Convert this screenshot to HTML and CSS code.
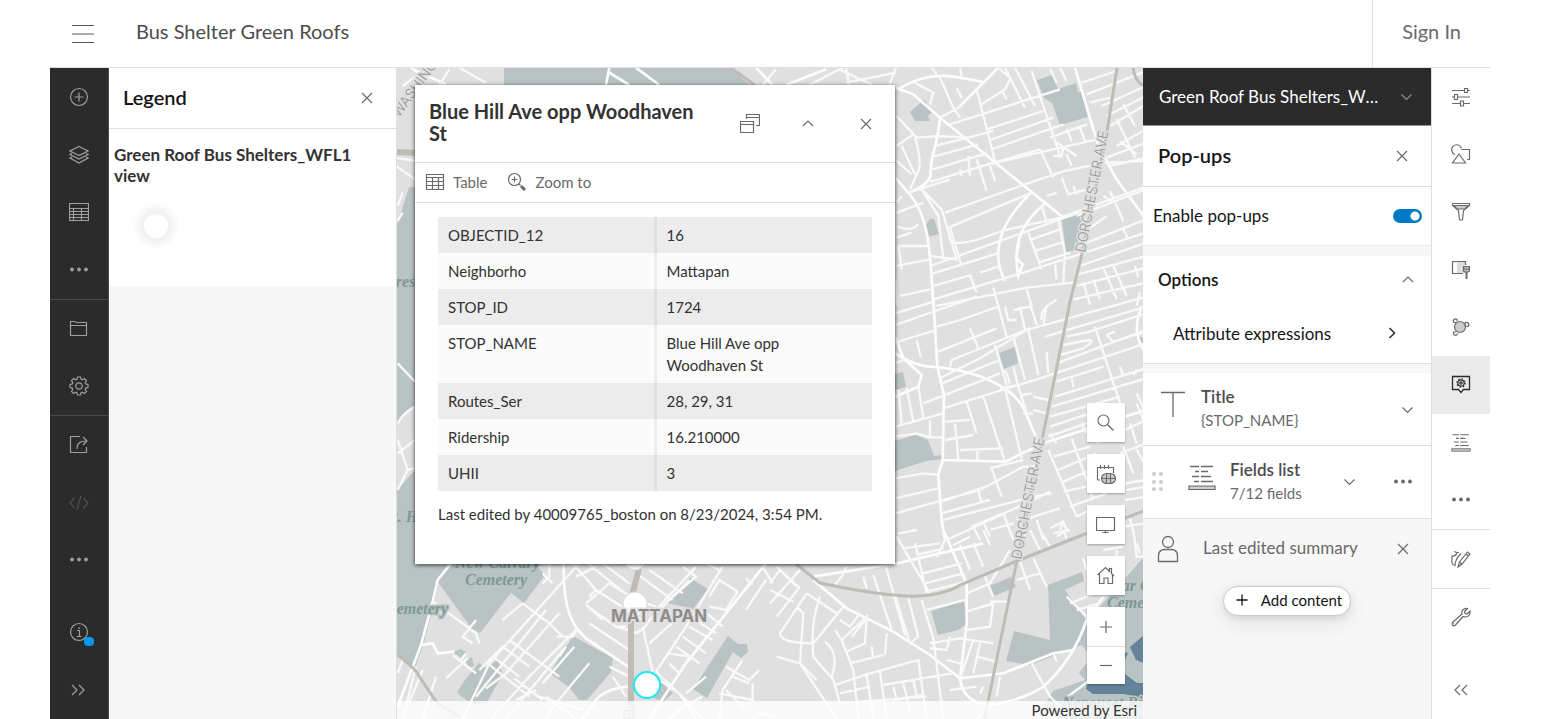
FILE: index.html
```html
<!DOCTYPE html>
<html lang="en">
<head>
<meta charset="utf-8">
<title>Bus Shelter Green Roofs</title>
<link rel="stylesheet" href="styles.css">
</head>
<body>
<svg class="defs" aria-hidden="true">
  <symbol id="i-x" viewBox="0 0 16 16"><path d="M3 3l10 10M13 3L3 13"/></symbol>
  <symbol id="i-down" viewBox="0 0 16 16"><path d="M2.500 5.500l5 5 5-5"/></symbol>
  <symbol id="i-up" viewBox="0 0 16 16"><path d="M3 10l5-5 5 5"/></symbol>
  <symbol id="i-dots" viewBox="0 0 24 24"><g fill="currentColor" stroke="none"><circle cx="5" cy="11.500" r="1.900"/><circle cx="12" cy="11.500" r="1.900"/><circle cx="19" cy="11.500" r="1.900"/></g></symbol>
  <symbol id="i-fields" viewBox="0 0 28 26"><path d="M2 1.500h9M13 1.500h12M7 6.500h4M13 6.500h7M4 11.500h7M13 11.500h10M6 16.500h5M13 16.500h12" stroke-width="1.500"/><path d="M1 21h26v3.500H1z" fill="#ccc"/></symbol>
</svg>

<div class="app">
  <header class="topbar">
    <button class="menu" aria-label="Menu"><svg width="22" height="20"><path d="M0 1.500h22M0 18.500h22" stroke="#555"/><path d="M0 10h22" stroke="#aaa" stroke-width="2"/></svg></button>
    <h1 class="map-title">Bus Shelter Green Roofs</h1>
    <a class="signin" href="#">Sign In</a>
  </header>

  <div class="workspace">
    <nav class="rail rail-dark" aria-label="Map tools">
      <div class="rail-group four">
        <button aria-label="Add"><svg width="20" height="20"><circle cx="10" cy="10" r="8.500"/><path d="M10 5.500v9M5.500 10h9"/></svg></button>
        <button aria-label="Layers"><svg width="20" height="20"><path d="M10 1.500l9 4.500-9 4.500L1 6z"/><path d="M3 8.500l-2 1 9 4.500 9-4.500-2-1M3 12l-2 1 9 5 9-5-2-1"/></svg></button>
        <button aria-label="Tables"><svg width="20" height="20"><path d="M.5 1.500h19v17H.5zM.5 6.500h19M4.500 6.500v12M12.500 6.500v12M.5 9.500h19M.5 12.500h19M.5 15.500h19"/></svg></button>
        <button aria-label="More"><svg width="24" height="24"><use href="#i-dots"/></svg></button>
      </div>
      <div class="rail-group two">
        <button aria-label="Save and open"><svg width="20" height="20"><path d="M1.500 16.500v-14h4l2 1h10v13zM1.500 6.500h16" /></svg></button>
        <button aria-label="Map properties"><svg width="20" height="20" viewBox="0 0 20 20"><circle cx="10" cy="10" r="3.200"/><path d="M8.500 1h3l.6 2.300 1.200.5L15.400 2.500l2.100 2.100-1.300 2.100.5 1.200 2.300.6v3l-2.300.6-.5 1.200 1.300 2.100-2.100 2.100-2.100-1.300-1.200.5-.6 2.300h-3l-.6-2.300-1.200-.5-2.100 1.300-2.100-2.100 1.300-2.100-.5-1.200L1 11.500v-3l2.300-.6.5-1.200L2.500 4.600l2.100-2.100 2.100 1.300 1.200-.5z"/></svg></button>
      </div>
      <div class="rail-group three">
        <button aria-label="Share map"><svg width="20" height="20"><path d="M11 1.500H1.500v16h16V12M8 14c0-6 3-8 9-8M14 2l4 4-4 4"/></svg></button>
        <button class="disabled" disabled aria-label="Create app"><svg width="20" height="20"><path d="M5.500 5L1 10l4.500 5M14.500 5l4.500 5-4.500 5M12 3L8 17"/></svg></button>
        <button aria-label="More options"><svg width="24" height="24"><use href="#i-dots"/></svg></button>
      </div>
      <div class="rail-group two rail-end">
        <button class="info" aria-label="Information"><svg width="20" height="20"><circle cx="10" cy="10" r="8.500"/><path d="M10 5v2M8 8.500h2.500v6M7.500 14.500h5"/></svg><span class="badge"></span></button>
        <button aria-label="Expand"><svg width="20" height="20"><path d="M3 5l5 5-5 5M10 5l5 5-5 5"/></svg></button>
      </div>
    </nav>

    <aside class="legend">
      <div class="panel-head">
        <h2>Legend</h2>
        <button aria-label="Close legend"><svg width="16" height="16"><use href="#i-x"/></svg></button>
      </div>
      <div class="legend-body">
        <h3>Green Roof Bus Shelters_WFL1 view</h3>
        <span class="swatch"><i></i></span>
      </div>
    </aside>

    <main class="map">
      <svg class="basemap" viewBox="397 68 746 651" preserveAspectRatio="xMinYMin slice" aria-label="Map of Mattapan">
        <g class="park">
          <path d="M504 68h227l20 18H504z"/>
          <path d="M397 225l12-38h8v220q-10 3-20 16z"/>
          <path d="M397 490l18-20v95h37l-13 17-15 61-9 25-18-14z"/>
          <path d="M438 582l15-18h82l10 11-21 28-13-10-31 40-8-4z"/>
          <path d="M573 636l40 22-2 14-24 28h-8l-9-12-20-15z"/>
          <path d="M457 692l8-12 14-17 8 5 11-9 3 10 1 7-7 12-9 16h-14l-11-8zM453 652l8-3 5 3-3 7zM466 660l6-3 2 9-6 2z"/>
          <path d="M728 636l10 8 9 0 1 8-7 6-8-6-26 46-14-9zM690 578l18 11-15 20-25-6 10-14zM660 681l13 12-10 9-12-5z"/>
          <path d="M931 611l33-10 3 23-9 6-20 5z"/>
          <path d="M989 586l22-9 5 10-22 9zM1048 585l34-13 2 9-19 9 22 31 56-63v161h-82l-18-10 10-18 32-11-6-7 12-15-9-13-52 20-24-4 8-30 36 9z"/>
          <path d="M1037 80l15-5 6 14 18-6 2 9 4 0 6 25-28 8-8-22-8-5zM910 112l14-12 8 12-4 4 2 5-10 0-5 0zM1062 220l21-7-6 37-11 2zM925 226l5-7 4 0 5 15-12 3z"/>
          <path d="M999 353l16-6 3 16-14 6zM895 374l8-2 3 15-11 3zM895 441l20-6 13 5 6 16 8-1v4l-16 2-31 10zM1139 336l8 5v15l-6-8z"/>
        </g>
        <g class="water"><path d="M1143 636l-13 11 6 13 8 3zM1087 684l22 0 12-13 16 12 6 0v15l-20-4-30 0-7-5zM1124 652l4 1-3 7z"/></g>

        <g transform="translate(396 66) scale(.3333)" class="streets">
          <path class="big" d="M45 5L60 15L150 55M640 5L630 57M640 20L700 57M720 5L790 57M1080 5L1130 57M1170 57L1290 10"/>
          <path d="M190 5L270 50M60 30L20 60M160 10L130 57M1140 10L1100 57M1240 57L1340 5M1330 10L1430 57M1350 50L1500 20M1350 5L1360 57M1500 5L1480 57M0 275L60 285M0 300L57 340M5 420L20 380M5 465L20 440"/>
          <path d="M5 892L57 947M5 1072Q20 1042 57 1022M5 1122L35 1212L5 1272M5 1162L57 1122M35 1212L57 1207"/>
        </g>

        <g transform="translate(890 66) scale(.3333)" class="streets">
          <path class="big" d="M16 65L70 85L150 155L520 455M150 155C142 250 118 270 122 330Q110 360 55 380L16 335M55 380C118 450 120 550 130 720M25 70Q110 15 210 35L280 48M210 120L260 70L325 5M555 5L625 240L680 340L768 460M425 378C330 470 300 560 345 645M470 408C380 480 370 550 385 630L398 595L378 575L388 530"/>
          <path d="M125 5L140 25M150 35L190 125L210 155M200 65L215 95M260 70L315 285M335 72L350 100M275 115L345 70L360 40M325 5L360 35M345 5L405 125M375 5L435 120M425 15L510 270M480 8L500 50M510 5L530 45M150 155L215 120M180 175L510 70M290 190L460 135M300 222L490 155M305 250L520 175M480 215L590 175M140 210L235 215L310 195M135 240L235 215M130 272L265 235M128 310L290 262M120 348L320 288L450 250M55 380L180 340M310 292L620 220M165 440L420 350L525 315L640 290L768 285M175 485L425 380M185 525Q210 545 335 495L510 455L768 362M120 600L400 500L620 420M20 600L120 580M25 540L120 540M25 540L35 610M120 625L330 560M130 660L240 628L260 680M130 700L400 620L768 500M140 720L410 665L550 650M30 690L120 670M120 570L200 580L155 430L95 370M160 580L145 450L95 370M215 600L180 485M20 720L16 640M20 480Q60 500 85 475M20 515L65 500M20 440L100 410M20 410L35 390M80 215L20 150M80 215L145 210M20 240L70 205M75 215Q100 300 80 325L60 370M35 240L75 325M20 285L65 325M75 50L130 80L120 115M210 5L215 30M235 270L240 330M260 280L290 375M300 300L315 345M210 310L215 330M450 250L490 335M490 270L515 270L520 245M515 335L535 385L590 370M550 360L560 385M455 420L470 470M415 500L455 610M425 520L510 490M435 555L515 530M445 590L540 560M505 460L525 560L520 650M495 595L500 640M270 620L330 600M310 665L325 720M410 670L425 720M470 390L500 380M570 185L585 225M530 190L545 225M500 230L560 270M530 265L545 300M575 50L680 15M590 85L768 15M600 110L660 95M635 120L768 60M650 150L768 90M660 180L768 115M680 240L768 190M690 225L740 265M680 160L735 275M700 115L735 180M650 275L768 230M660 300L768 275M560 450L768 370M580 500L650 450M570 600L768 530M565 625L768 570M560 660L768 605M590 530L768 460M550 700L768 650M640 605L680 700M670 600L710 690M580 650L600 715M610 640L630 700M640 390L670 410M660 375L700 465M700 490L715 520M735 600L745 635M740 720L750 680"/>
        </g>

        <g transform="translate(890 300) scale(.3333)" class="streets">
          <path class="big" d="M130 0L142 200L162 285L158 480L145 525L155 660L165 720M16 160Q80 200 125 200C260 210 380 260 410 345L450 440M16 110L40 175L95 225L85 260L16 290M160 480L345 485L460 430L768 330M755 20C730 80 740 120 768 160"/>
          <path d="M16 40L130 5M16 75L260 -10M16 130L40 120L140 90M140 80L210 60L325 20M145 155L320 85M150 235L270 175L410 90L768 -10M155 250L330 180M180 200L185 180L420 85M100 310L330 220M160 325L450 235L768 130M16 380L160 340M16 410L80 400L120 412L160 412M120 360L120 410M16 190L40 180M80 120L92 170M240 85L265 145M315 135L350 255M370 110L405 240M415 90L445 225M345 20L355 60L380 60M320 0L350 110M390 20L405 90M370 30L420 20M420 10L440 75M455 60Q450 25 500 0M460 75L470 15M470 155L475 220M465 110L768 20M530 110L600 95L768 40M520 135L595 120Q620 120 580 145L510 165M500 190L768 90M650 105L675 95M650 105L670 125L768 95M615 80L690 310M500 245L640 200M545 235L550 260M495 290L768 205M485 320L768 235M480 350L690 290M480 380L690 310M475 410L590 370M690 200L700 230M740 210L730 225M740 280L768 340M345 265L395 475M230 305L260 400M280 290L345 485M330 265L385 255M370 200L385 260L410 340M395 285L425 280M430 290L475 300M400 340L430 340M430 330L470 340M345 210L360 250M165 365L240 360M195 370L200 420L205 480M165 420L250 405M210 450L340 445M262 445L262 480M85 260L100 355M50 265L70 365M25 270L35 370M16 535L100 520L145 525M16 595L145 565M16 640L270 570L400 500L440 500M155 605L300 555M155 640L300 600M160 660L430 590L485 580M170 720L430 600L480 575M305 505L335 590M265 570L275 610M300 505L400 480M250 680L270 720M245 680L340 640L370 720M280 665L300 710M300 690L370 670M380 650L410 720M440 660L460 720M400 660L510 625M475 450L560 650M545 415L590 540L610 600M490 470L600 440M505 510L620 460M520 545L590 515M520 575L590 560M540 620L650 580M560 650L600 630M480 685L520 665L530 690L500 710M510 690L520 665M575 370L590 400M480 400L500 430M620 430L768 360M690 460L768 430M700 440L730 520M720 370L740 430M740 310L768 380M735 440L768 500M705 550L768 540M710 570L768 560M705 600L768 590M700 680L768 670M720 655L735 720"/>
        </g>

        <g transform="translate(396 530) scale(.3333)" class="streets">
          <path class="big" d="M165 100L125 150L110 215L75 345L5 530M503 100C500 240 530 290 570 325L700 412M700 470Q630 475 600 510L560 567M1110 100L870 400L760 567M75 345L110 340L125 370L175 365"/>
          <path d="M570 225L620 270M5 430L20 390M60 410L20 567M30 540L80 420M120 440L80 567M110 215L240 310L250 340M240 270L200 320L230 340M550 100L280 400L200 567M450 240L240 500M490 250L330 430L270 475M545 295L400 440L285 567M480 320L530 320L545 295M510 350L330 567M535 350L440 460M580 400L480 520L450 567M150 445L215 385M170 375L240 430M190 395L210 370M250 420L320 350L400 410M290 380L370 440M340 330L490 440M380 220L460 280L500 320M320 270L380 220M275 400L400 500M355 445L440 510M360 510L420 480M450 500L540 567M430 500L560 540M490 380L510 350M530 100L600 180L740 270M575 100L700 200M540 140L600 110M620 100L700 160M570 220L640 160M570 225L660 290L730 310M580 280L700 360M640 160L720 210L780 230M600 180L580 200M700 310Q740 310 760 270L880 150M690 290L660 290M740 290L770 425M760 340L850 260M780 425L870 290L980 110M780 240L900 110M760 120L860 190M720 130L830 210M860 110L900 140L820 210M940 230L990 240L1025 185L970 150L940 200M930 100L970 120M1050 145L1070 165M1110 150L1050 240M1100 110L1130 160M860 320L930 370M880 290L950 330M900 270L960 310M920 240L980 290M840 350L910 400M820 370L880 380L850 430L820 400M780 425L880 520L920 500M790 450L850 490L900 567M870 490L930 440M1090 420L1060 450L990 410M1070 460L1070 510L970 490M1040 390L980 480L970 567M1010 440L1060 460M990 480L1050 540M850 490L920 567M700 440L640 410M690 500L650 440M1070 567Q1080 540 1140 560M440 130L470 160M460 100L460 140L440 160M820 567L870 520"/>
        </g>

        <g transform="translate(770 530) scale(.3333)" class="streets">
          <path class="big" d="M130 150L230 235L370 305L480 375L570 445Q580 520 660 525Q760 510 820 470Q910 390 950 270L1000 200M520 0L590 160L590 280L570 445M570 445L700 430L850 370L910 360M130 140L380 100L640 40"/>
          <path d="M0 160L30 120L90 175M20 110L80 170M0 220L90 120M20 260L90 170M0 180L70 215M110 190L200 250M110 190L30 310Q30 340 130 340L220 230M80 230L100 250L90 400L140 450M200 567L90 400L20 380M150 200Q120 280 130 380L190 450L210 520M165 335Q210 370 185 440M215 330L250 420L265 567M195 300L215 330L290 260L285 340L230 365M210 270L240 290L270 250M240 400L340 375M350 310L345 375M245 320L290 265M305 350L310 385M280 140L290 175M310 135L330 195L365 300M345 100L405 315M375 195L420 340L445 320L415 205M455 210L490 325L520 567M195 465L300 430L445 390L470 567M330 425L350 567M290 435L310 567M340 465L545 430M370 470L380 510M400 460L420 540M430 450L440 500M210 490L300 470M370 510L460 495M200 520L470 500M540 480L620 470M470 240L585 210M480 340L570 325L670 340M480 355L530 360L540 320M530 390L570 400M610 330L570 445M630 340L610 430M620 380L680 395M590 245L670 220L660 290L590 300M460 130L575 100M465 160L580 130M470 185L590 155M380 20L480 190M400 55L510 40M435 40L470 190M440 75L520 55M230 110L215 140L190 170M385 10L440 0M500 80L530 20M550 45L600 20M570 45L600 120M610 40L640 110M640 0L660 45M590 190L660 160L720 60M640 130L670 200M750 95L780 180M790 85L830 170M740 150L810 130M720 215L660 215M780 0L810 60M810 0L840 50M850 10L900 0M880 0L890 25M890 200L960 270M900 220L1000 180M920 240L990 220M940 85L950 120M785 400L840 500L870 530M850 370L860 395M690 440L680 500M640 470L630 490M1000 60L1060 50M1040 90L1040 60M1090 0L1100 80L1140 80M1100 40L1110 70M880 510L960 450M620 567L660 530"/>
        </g>

        <g class="arterial">
          <path d="M1117 68L1106 138 1081 258 1070 302 1042 440 1017 560 988 702 984 719"/>
          <path d="M796 564L820 583Q900 600 930 595Q950 592 960 585L1017 561 1090 532 1146 510M1133 66Q1134 82 1146 87M397 655Q405 660 415 670L437 703 460 717M731 68L748 80 760 90"/>
          <path class="wide" d="M640 564L631 600V720M396 152L418 153"/>
        </g>
        <g class="street-label">
          <text transform="translate(1085 253) rotate(-79)">DORCHESTER AVE</text>
          <text transform="translate(1021 560) rotate(-79)">DORCHESTER AVE</text>
          <text transform="translate(399 118) rotate(-54)">WASHINGTON</text>
          <text transform="translate(634 728) rotate(-90)">RD</text>
        </g>
        <g class="park-label">
          <text x="455" y="568">New Calvary</text><text x="465" y="585">Cemetery</text>
          <text x="386" y="614">Cemetery</text><text x="377" y="287">Forest</text><text x="379" y="522">Mt. Hope</text>
          <text x="1096" y="591">Cedar Grove</text><text x="1107" y="608">Cemetery</text>
          <text x="1062" y="708">Neponset River</text><text x="1068" y="725">Reservation</text>
        </g>
        <circle class="stop" cx="635" cy="558" r="12"/>
        <circle class="stop" cx="635" cy="604" r="12"/>
        <text class="place-label" x="611" y="622">MATTAPAN</text>
        <circle class="stop selected" cx="647" cy="685" r="13"/>
      </svg>

      <section class="popup" aria-label="Feature details">
        <div class="popup-head">
          <h2>Blue Hill Ave opp Woodhaven St</h2>
          <button aria-label="Dock"><svg width="20" height="20"><path d="M.5 7.500h13v11H.5zM.5 10.500h13M6.500 5V.5h13v11H16M6.500 3.500h13"/></svg></button>
          <button aria-label="Collapse"><svg width="16" height="16"><use href="#i-up"/></svg></button>
          <button aria-label="Close"><svg width="16" height="16"><use href="#i-x"/></svg></button>
        </div>
        <div class="popup-actions">
          <button><svg width="20" height="20"><path d="M1.500 2.500h17v15h-17zM1.500 5.500h17M1.500 9.500h17M1.500 13.500h17M7.500 5.500v12M13.500 5.500v12"/></svg>Table</button>
          <button><svg width="20" height="20"><circle cx="7.500" cy="7.500" r="6"/><path d="M7.500 4.500v6M4.500 7.500h6M12 12l1.500 1.500"/><path d="M14 14l4 4" stroke-width="3"/></svg>Zoom to</button>
        </div>
        <div class="popup-body">
          <table>
            <tr><th scope="row">OBJECTID_12</th><td>16</td></tr>
            <tr><th scope="row">Neighborho</th><td>Mattapan</td></tr>
            <tr><th scope="row">STOP_ID</th><td>1724</td></tr>
            <tr><th scope="row">STOP_NAME</th><td>Blue Hill Ave opp<br>Woodhaven St</td></tr>
            <tr><th scope="row">Routes_Ser</th><td>28, 29, 31</td></tr>
            <tr><th scope="row">Ridership</th><td>16.210000</td></tr>
            <tr><th scope="row">UHII</th><td>3</td></tr>
          </table>
          <p>Last edited by 40009765_boston on 8/23/2024, 3:54 PM.</p>
        </div>
      </section>

      <div class="controls">
        <button aria-label="Search"><svg width="20" height="20"><circle cx="7.500" cy="7.500" r="5.500"/><path d="M11.500 11.500l6 6"/></svg></button>
        <button aria-label="Basemap time"><svg width="20" height="20"><path d="M1.500 16V3.500h16V9M1.500 16H4M4.500 1v4M8.500 1v4M12.500 1v4"/><rect x="5.500" y="9.500" width="14" height="10" rx="5" fill="#ccc"/><path d="M10.500 10v9M14.500 10v9M6 14.500h13"/></svg></button>
        <button aria-label="Display"><svg width="20" height="20"><path d="M.5 2.500h18v13H.5zM9.500 15v3M6.500 17.500h6"/></svg></button>
        <button aria-label="Default map view"><svg width="20" height="20"><path d="M1.500 9L9.500 1.500l4 4v-3h2v5L18 10M3.500 8v9.500H8V12h4v5.500h4.500V9"/></svg></button>
        <div class="zoom">
          <button aria-label="Zoom in"><svg width="20" height="20"><path d="M10 4v12M4 10h12"/></svg></button>
          <button aria-label="Zoom out"><svg width="20" height="20"><path d="M4 9.500h12"/></svg></button>
        </div>
      </div>
      <footer class="attribution">Powered by Esri</footer>
    </main>

    <aside class="settings">
      <button class="layer-pick"><span>Green Roof Bus Shelters_WFL1 view</span><svg width="16" height="16"><use href="#i-down"/></svg></button>
      <div class="panel-head">
        <h2>Pop-ups</h2>
        <button aria-label="Close pop-ups"><svg width="16" height="16"><use href="#i-x"/></svg></button>
      </div>
      <div class="enable"><label for="enable">Enable pop-ups</label><input class="switch" id="enable" type="checkbox" checked></div>
      <section class="options">
        <button class="options-head"><span>Options</span><svg width="16" height="16"><use href="#i-up"/></svg></button>
        <button class="attribute"><span>Attribute expressions</span><svg width="16" height="16"><path d="M5.500 3l5 5-5 5" stroke-width="1.500"/></svg></button>
      </section>
      <div class="block title-block">
        <svg width="26" height="28"><path d="M1 2.500h24M13 2.500V27" stroke-width="1.300"/></svg>
        <div class="block-text"><h3>Title</h3><p>{STOP_NAME}</p></div>
        <button aria-label="Expand title"><svg width="16" height="16"><use href="#i-down"/></svg></button>
      </div>
      <div class="block fields-block">
        <svg class="grip" width="12" height="20"><g fill="#ccc" stroke="none"><circle cx="2" cy="2" r="2"/><circle cx="9" cy="2" r="2"/><circle cx="2" cy="10" r="2"/><circle cx="9" cy="10" r="2"/><circle cx="2" cy="17" r="2"/><circle cx="9" cy="17" r="2"/></g></svg>
        <svg class="fields-icon" width="28" height="26"><use href="#i-fields"/></svg>
        <div class="block-text"><h3>Fields list</h3><p>7/12 fields</p></div>
        <button aria-label="Expand fields list"><svg width="16" height="16"><use href="#i-down"/></svg></button>
        <button aria-label="Fields list options"><svg width="24" height="24"><use href="#i-dots"/></svg></button>
      </div>
      <div class="summary">
        <svg width="22" height="28"><circle cx="11" cy="7" r="5.500" stroke-width="1.300"/><path d="M1.500 26.500V21q0-6.500 6.500-6.500h6q6.500 0 6.500 6.500v5.500z" stroke-width="1.300"/></svg>
        <span>Last edited summary</span>
        <button aria-label="Remove summary"><svg width="16" height="16"><use href="#i-x"/></svg></button>
      </div>
      <button class="add-content"><svg width="16" height="16"><path d="M8 2.500v11M2.500 8h11" stroke-width="1.300"/></svg>Add content</button>
    </aside>

    <nav class="rail rail-light" aria-label="Layer settings">
      <div class="rail-group eight">
        <button aria-label="Properties"><svg width="20" height="20"><path d="M1 3.500h12M17 3.500h2M1 10h2M7 10h12M1 16.500h8M13 16.500h6"/><path d="M13.500 1.500h3v4h-3zM3.500 7.500h3v5h-3zM9.500 14h3v5h-3z"/></svg></button>
        <button aria-label="Styles"><svg width="20" height="20"><path d="M4 10.500a5 5 0 1 1 6.500-6M10.500 5.500h8v10H16M8 10l6.500 9h-13z"/></svg></button>
        <button aria-label="Filter"><svg width="20" height="20"><path d="M1.500 1.500h17v2l-6 5-1 9.500h-3l-1-9.500-6-5z"/><path d="M3 3.500h14L14 7H6z" fill="#ccc"/></svg></button>
        <button aria-label="Effects"><svg width="20" height="20"><path d="M6 2h8v11H6z" fill="#ddd" stroke="none"/><path d="M12 13.500H1.500v-12h13V5"/><path d="M12.500 6.500h6v4q0 1.500-3 1.500t-3-1.500zM12.500 9h6" fill="#bbb"/><path d="M15.500 12v7" stroke-width="2"/></svg></button>
        <button aria-label="Aggregation"><svg width="20" height="20"><circle cx="9" cy="10" r="5.500" fill="#ccc"/><path d="M5 5.500H3a2 2 0 1 1 3-3v2M14 8.500V6a2.300 2.300 0 1 1 3 3.500l-2-.5M5 15H3a2 2 0 1 0 3.500 1.500"/></svg></button>
        <button class="active" aria-label="Pop-ups"><svg width="20" height="20"><path d="M1.500 1.500h17v13h-6L10 17.500l-2.500-3h-6z" stroke-width="1.300"/><circle cx="10" cy="8" r="1.200"/><circle cx="10" cy="8" r="3.200"/><circle cx="10" cy="8" r="4.200" stroke-dasharray="1.300 2" stroke-width="1.300"/></svg></button>
        <button aria-label="Fields"><svg width="20" height="20"><use href="#i-fields"/></svg></button>
        <button aria-label="More settings"><svg width="24" height="24"><use href="#i-dots"/></svg></button>
      </div>
      <div class="rail-group one">
        <button aria-label="Edit"><svg width="20" height="20"><path d="M7 18l1.500-5L16.500 3l2.500 2-8 10zM8.500 13l2.500 2M15 5l2.500 2M1 9V7q4 .5 5-3.500M6 3.500l-3-1M6 3.500l2 0M1 9q-1 7 3 7.500 0-6 6-12"/></svg></button>
      </div>
      <div class="rail-group two-thirds plain">
        <button aria-label="Map tools"><svg width="20" height="20"><path d="M16.500 1.500l-3 3 .5 2 2 .5 3-3q.5 5-4 6-2 0-3-.5L4.500 18q-1.500 1.500-3 0-1-1.500.5-3L11 7q-1-4 2.500-5.300 1.500-.5 3-.2zM3 16l-.5.5"/></svg></button>
      </div>
      <div class="rail-group one plain rail-end">
        <button aria-label="Collapse settings"><svg width="20" height="20"><path d="M9 5l-5 5 5 5M16 5l-5 5 5 5"/></svg></button>
      </div>
    </nav>
  </div>
</div>
</body>
</html>
```

FILE: styles.css
```css
* { box-sizing: border-box; }
body {
  margin: 0;
  padding: 0 60px 0 50px;
  background: #fff;
  color: #323232;
  font-family: Lato, "Open Sans", sans-serif;
  font-size: 16px;
}
h1, h2, h3, p { margin: 0; font-weight: 400; }
button {
  display: flex;
  align-items: center;
  justify-content: center;
  margin: 0;
  padding: 0;
  border: 0;
  background: none;
  color: #6a6a6a;
  font: inherit;
  cursor: pointer;
}
svg { fill: none; stroke: currentColor; stroke-width: 1.2; flex: none; }
.defs { position: absolute; width: 0; height: 0; }

.app { display: flex; flex-direction: column; height: 100vh; }
.topbar {
  display: flex;
  align-items: center;
  flex: none;
  height: 68px;
  padding-left: 22px;
  border-bottom: 1px solid #dfdfdf;
}
.map-title { flex: 1; margin-left: 42px; padding-bottom: 5px; font-size: 20px; color: #4c4c4c; }
.signin {
  display: flex;
  align-items: center;
  height: 100%;
  padding: 0 29px 5px;
  border-left: 1px solid #dfdfdf;
  color: #6a6a6a;
  font-size: 20px;
  text-decoration: none;
}
.workspace { display: flex; flex: 1; min-height: 0; }

.rail { display: flex; flex-direction: column; flex: none; width: 59px; }
.rail-group { display: flex; flex-direction: column; border-bottom: 1px solid; }
.rail-group button { position: relative; flex: 1; color: inherit; }
.rail-dark { background: #2b2b2b; color: #9f9f9f; border-right: 1px solid #4a4a4a; }
.rail-dark .rail-group { border-color: #4a4a4a; }
.rail-light { border-left: 1px solid #dfdfdf; color: #6a6a6a; }
.rail-light .rail-group { border-color: #dfdfdf; }
.rail .three, .rail .rail-end, .rail .plain { border-bottom: 0; }
.one { height: 59px; }
.two-thirds { height: 56px; }
.two { height: 116px; }
.three { height: 173px; }
.four { height: 232px; }
.eight { height: 462px; }
.rail-end { margin-top: auto; }
.rail .disabled { color: #4f4f4f; }
.rail .active { background: #eaeaea; color: #2b2b2b; }
.badge { position: absolute; left: 34px; top: 34px; width: 10px; height: 9px; border-radius: 4px; background: #009af2; }

.legend { flex: none; width: 288px; background: #f7f7f7; border-right: 1px solid #dfdfdf; }
.panel-head {
  display: flex;
  align-items: center;
  justify-content: space-between;
  height: 61px;
  padding: 0 21px 0 14px;
  background: #fff;
  border-bottom: 1px solid #dfdfdf;
}
.panel-head h2 { padding-bottom: 3px; color: #151515; font-size: 20px; font-weight: 600; }
.legend-body { height: 157px; padding: 15px 24px 15px 5px; background: #fff; }
.legend-body h3 { font-size: 17px; font-weight: 700; line-height: 21px; }
.swatch { display: block; margin: 16px 0 0 18px; width: 48px; height: 48px; border-radius: 24px; padding: 12px; background: radial-gradient(#f1f1f1 40%, #fff 70%); }
.swatch i { display: block; width: 24px; height: 24px; border-radius: 12px; background: #fff; }

.map { position: relative; flex: 1; min-width: 0; overflow: hidden; background: #e0e0e0; }
.basemap { display: block; width: 100%; height: 100%; }
.park { fill: #bac3c3; stroke: none; }
.water { fill: #64829a; stroke: none; }
.streets path { stroke: #f9f9f8; stroke-width: 7; }
.streets .big { stroke: #fdfdfd; stroke-width: 8; }
.arterial path { stroke: #bfbcb5; stroke-width: 3; }
.arterial .wide { stroke-width: 6; }
.basemap text { stroke: #e0e0e0; stroke-width: 3; paint-order: stroke; }
.street-label { fill: #999; font-size: 14px; font-family: Inter, sans-serif; font-weight: 300; }
.basemap .park-label text { fill: #7c9993; stroke: #bac3c3; font: italic bold 16px "Liberation Serif", serif; }
.place-label { fill: #8d8d8d; font: 700 17px Inter, sans-serif; }
.stop { fill: #fff; stroke: #ddd; }
.selected { stroke: #18eaf4; stroke-width: 2; }

.popup {
  position: absolute;
  left: 18px;
  top: 17px;
  width: 480px;
  padding-bottom: 39px;
  background: #fff;
  box-shadow: 0 1px 4px rgba(0, 0, 0, .8);
}
.popup-head { display: flex; align-items: center; height: 78px; padding-left: 14px; border-bottom: 1px solid #dfdfdf; }
.popup-head h2 { flex: 1; padding: 0 8px 4px 0; font-size: 20px; font-weight: 700; line-height: 22px; }
.popup-head button { width: 58px; height: 58px; }
.popup-actions { display: flex; gap: 20px; height: 40px; padding: 0 0 2px 10px; border-bottom: 1px solid #dfdfdf; }
.popup-actions button { gap: 8px; font-size: 15px; }
.popup-body { padding: 14px 23px 0; font-size: 15px; }
.popup-body p { margin-top: 12px; line-height: 22px; }
table { width: 100%; border-collapse: collapse; table-layout: fixed; }
tr { background: #fbfbfb; }
tr:nth-child(odd) { background: #ececec; }
th, td { padding: 7px 10px; font-weight: 400; text-align: left; vertical-align: top; line-height: 22px; }
th { border-right: 3px solid rgba(0, 0, 0, .05); }

.controls { position: absolute; right: 18px; bottom: 35px; display: flex; flex-direction: column; gap: 12px; width: 38px; }
.controls button { width: 38px; height: 39px; background: #fff; color: #6a6a6a; }
.controls > button, .zoom { box-shadow: 0 1px 2px rgba(0, 0, 0, .3); }
.zoom button + button { height: 38px; border-top: 1px solid #dfdfdf; }
.attribution {
  position: absolute;
  inset: auto 0 0;
  height: 18px;
  padding-right: 6px;
  background: rgba(255, 255, 255, .8);
  font-size: 15px;
  line-height: 18px;
  text-align: right;
}

.settings { flex: none; width: 288px; background: #f7f7f7; color: #151515; }
.layer-pick { justify-content: space-between; width: 100%; height: 58px; padding: 0 16px; background: #2b2b2b; border-bottom: 1px solid #949494; color: #8f8f8f; }
.layer-pick span { width: 226px; overflow: hidden; color: #fff; font-size: 17px; line-height: 24px; text-align: left; text-overflow: ellipsis; white-space: nowrap; }
.settings .panel-head { padding-left: 15px; }
.enable { display: flex; align-items: center; justify-content: space-between; height: 59px; padding: 0 9px 0 10px; background: #fff; border-bottom: 1px solid #eaeaea; font-size: 17px; }
.enable label { padding-bottom: 2px; }
.switch { appearance: none; width: 29px; height: 14px; margin: 0; border-radius: 7px; background: radial-gradient(circle at 22px 7px, #fff 4px, #007ac2 5px); }
.options { margin: 10px 0 9px; padding-bottom: 2px; background: #fff; border-bottom: 1px solid #dfdfdf; }
.options button { justify-content: space-between; width: 100%; font-size: 17px; }
.options span { color: #151515; }
.options-head { height: 47px; padding: 0 15px; }
.options-head span { font-weight: 600; }
.attribute { height: 58px; padding: 2px 31px 0 30px; }
.attribute svg { color: #2b2b2b; }
.block { display: flex; align-items: center; height: 73px; background: #fff; border-bottom: 1px solid #dfdfdf; color: #6a6a6a; }
.block-text { flex: 1; padding-bottom: 2px; line-height: 22px; }
.block h3 { color: #4c4c4c; font-size: 17px; font-weight: 600; line-height: 24px; }
.block p { font-size: 15px; }
.title-block { padding: 0 15px 0 17px; }
.title-block > svg { margin: 0 15px 10px 0; }
.title-block > button { margin-top: 2px; }
.fields-block { padding: 0 16px 0 9px; }
.fields-icon { margin: 0 14px 8px 24px; }
.fields-block > button + button { margin-left: 33px; }
.summary { display: flex; align-items: center; height: 59px; padding: 0 20px 0 14px; color: #6a6a6a; font-size: 17px; }
.summary span { flex: 1; margin-left: 24px; padding-bottom: 3px; }
.add-content { gap: 11px; height: 30px; margin: 8px auto 0; padding: 0 8px 2px 10px; border: 1px solid #cacaca; border-radius: 15px; background: #fff; color: #151515; font-size: 15px; box-shadow: 0 6px 20px rgba(0, 0, 0, .1), 0 2px 6px rgba(0, 0, 0, .08); }
```
